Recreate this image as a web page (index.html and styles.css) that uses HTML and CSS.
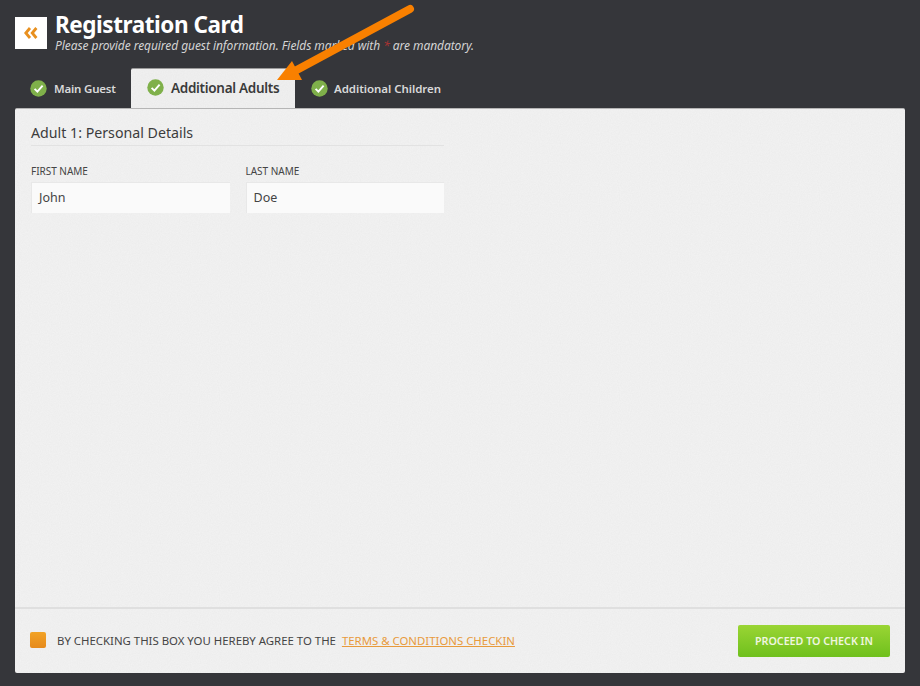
FILE: index.html
```html
<!DOCTYPE html>
<html lang="en">
<head>
<meta charset="utf-8">
<title>Registration Card</title>
<link rel="stylesheet" href="styles.css">
</head>
<body>
<div class="page">
  <header class="header">
    <a class="back"><svg width="14" height="12" viewBox="0 0 14 12"><path d="M6 1 1.8 6 6 11M12.4 1 8.2 6l4.2 5" fill="none" stroke="#e8901f" stroke-width="2.8"/></svg></a>
    <div class="heading">
      <h1 class="title">Registration Card</h1>
      <p class="subtitle">Please provide required guest information. Fields marked with <span class="req">*</span> are mandatory.</p>
    </div>
  </header>
  <nav class="tabs">
    <div class="tab"><svg class="check" viewBox="0 0 17 17"><circle cx="8.5" cy="8.5" r="8.2" fill="#7fb04a"/><path d="M4.6 8.8 7.4 11.6 12.6 5.6" fill="none" stroke="#fff" stroke-width="1.9"/></svg>Main Guest</div>
    <div class="tab active"><svg class="check" viewBox="0 0 17 17"><circle cx="8.5" cy="8.5" r="8.2" fill="#7fb04a"/><path d="M4.6 8.8 7.4 11.6 12.6 5.6" fill="none" stroke="#fff" stroke-width="1.9"/></svg>Additional Adults</div>
    <div class="tab"><svg class="check" viewBox="0 0 17 17"><circle cx="8.5" cy="8.5" r="8.2" fill="#7fb04a"/><path d="M4.6 8.8 7.4 11.6 12.6 5.6" fill="none" stroke="#fff" stroke-width="1.9"/></svg>Additional Children</div>
  </nav>
  <main class="panel">
    <section class="content">
      <h2 class="section-title">Adult 1: Personal Details</h2>
      <div class="fields">
        <div class="field"><label class="label">FIRST NAME</label><div class="input">John</div></div>
        <div class="field"><label class="label">LAST NAME</label><div class="input">Doe</div></div>
      </div>
    </section>
    <footer class="footer">
      <div class="agree">
        <span class="box"></span>
        <span class="agree-text">BY CHECKING THIS BOX YOU HEREBY AGREE TO THE</span>
        <a class="terms">TERMS &amp; CONDITIONS CHECKIN</a>
      </div>
      <a class="proceed">PROCEED TO CHECK IN</a>
    </footer>
  </main>
  <svg class="arrow" width="150" height="80" viewBox="0 0 150 80"><path d="M133 9 16 72" fill="none" stroke="#f98000" stroke-width="8" stroke-linecap="round"/><path d="M0 80 15 61 25 80Z" fill="#f98000"/></svg>
</div>
</body>
</html>
```
FILE: styles.css
```css
* { box-sizing: border-box; }
html, body { margin: 0; height: 100%; }
body { background: #35363a; font-family: "Noto Sans", "Open Sans", sans-serif; color: #3c3c3c; overflow: hidden; }
.page { position: relative; width: 920px; height: 686px; padding: 0 15px 13px; display: flex; flex-direction: column; }
.header { display: flex; align-items: flex-start; gap: 8px; padding-top: 11px; height: 68px; }
.back { width: 32px; height: 32px; margin-top: 6px; background: #fff; display: flex; align-items: center; justify-content: center; }
.heading { display: flex; flex-direction: column; }
.title { margin: 0; font-size: 22.5px; line-height: 27px; font-weight: 700; letter-spacing: -0.45px; color: #fff; }
.subtitle { margin: 0; font-size: 12px; line-height: 15px; font-style: italic; letter-spacing: -0.07px; color: #d4d4d4; }
.req { color: #a33; }
.tabs { display: flex; height: 40px; }
.tab { display: flex; align-items: center; gap: 7px; padding: 1px 16px 0 15px; font-size: 11.5px; font-weight: 600; letter-spacing: -0.05px; color: #d9d9d9; white-space: nowrap; width: 116px; }
.tab:first-child { letter-spacing: -0.2px; }
.tab:last-child { width: auto; padding-left: 16px; gap: 6px; }
.tab.active { width: 164px; padding: 0 16px 2px; gap: 7px; background-color: #f1f1f1; border-top: 1px solid #9a9a9a; font-size: 13.5px; letter-spacing: -0.3px; color: #3a3a3a; border-radius: 2px 2px 0 0; }
.check { width: 17px; height: 17px; flex: none; }
.panel, .tab.active { background-image: url("data:image/svg+xml,%3Csvg xmlns='http://www.w3.org/2000/svg' width='200' height='200'%3E%3Cfilter id='n'%3E%3CfeTurbulence type='fractalNoise' baseFrequency='0.9' numOctaves='2'/%3E%3CfeColorMatrix values='0 0 0 0 0 0 0 0 0 0 0 0 0 0 0 0 0 0 0.03 0'/%3E%3C/filter%3E%3Crect width='200' height='200' filter='url(%23n)'/%3E%3C/svg%3E"); }
.panel { flex: 1; display: flex; flex-direction: column; background-color: #f3f3f3; border-top: 1px solid #b5b5b5; border-radius: 2px; }
.content { flex: 1; padding: 14px 16px; }
.section-title { margin: 0; width: 413px; height: 23px; font-size: 14.2px; line-height: 20px; font-weight: 400; color: #3c3c3c; border-bottom: 1px solid #e2e2e2; }
.fields { display: flex; gap: 16px; width: 413px; margin-top: 18px; }
.field { flex: 1; display: flex; flex-direction: column; }
.label { font-size: 10px; line-height: 14px; letter-spacing: -0.02px; color: #444; margin-bottom: 4px; }
.input { height: 31px; background: #fafafa; border-top: 1px solid #e8e8e8; border-left: 1px solid #e8e8e8; padding: 0 7px; font-size: 12.5px; line-height: 29px; color: #444; }
.footer { height: 66px; display: flex; justify-content: space-between; align-items: flex-start; padding: 16px 15px 0 15px; border-top: 2px solid #dfdfdf; }
.agree { display: flex; align-items: center; height: 32px; margin-top: -1px; font-size: 11.4px; color: #444; }
.box { width: 16px; height: 16px; border-radius: 2px; background: linear-gradient(#f2a326, #e68a1c); margin-right: 11px; }
.terms { margin-left: 6px; color: #e89a3c; text-decoration: underline; }
.proceed { width: 152px; height: 32px; border-radius: 2px; background: linear-gradient(#9ad534, #6fc01d); color: #f0f6e0; font-size: 10.7px; font-weight: 600; display: flex; align-items: center; justify-content: center; }
.arrow { position: absolute; left: 277px; top: 0; }
```
